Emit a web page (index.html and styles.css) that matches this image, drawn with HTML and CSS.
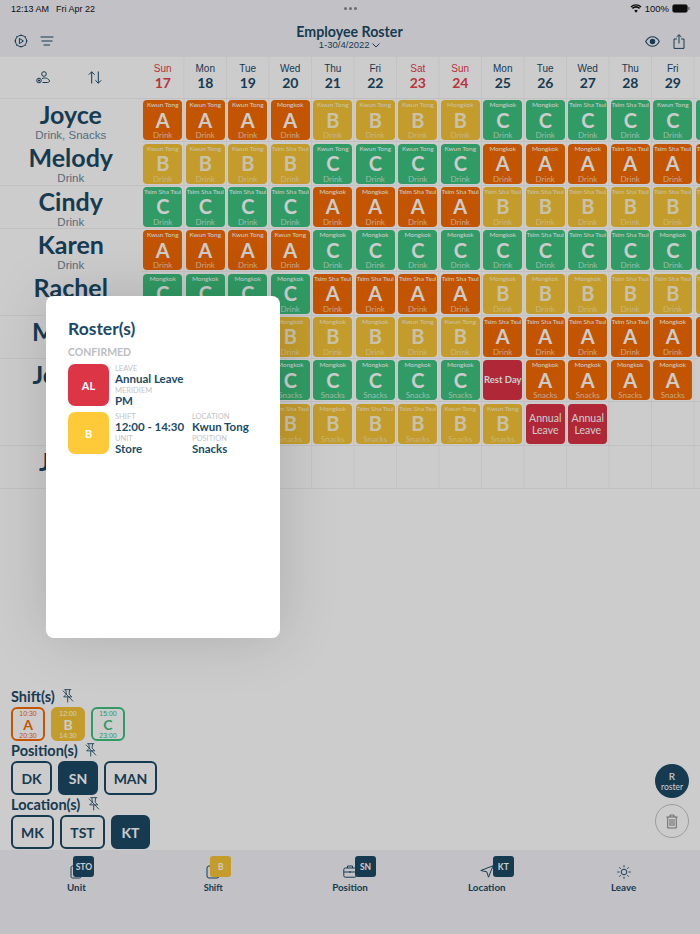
FILE: index.html
```html
<!DOCTYPE html>
<html lang="en">
<head>
    <meta charset="UTF-8">
    <meta name="viewport" content="width=device-width, initial-scale=1.0">
    <title>Employee Roster</title>
    <link rel="stylesheet" href="styles.css">
</head>
<body>
<div class="page">

    <!-- Status bar + nav -->
    <header class="top">
        <div class="status">
            <span class="status-time"><span>12:13 AM</span><span>Fri Apr 22</span></span>
            <span class="status-dots"><i></i><i></i><i></i></span>
            <span class="status-right">
                <svg class="wifi" viewBox="0 0 16 12" width="12" height="9"><path d="M8 11.5 5.6 8.6a3.6 3.6 0 0 1 4.8 0zM3.9 6.7a6.2 6.2 0 0 1 8.2 0l1.5-1.7a8.6 8.6 0 0 0-11.2 0zM.6 3.2l1.2 1.3a9.4 9.4 0 0 1 12.4 0l1.2-1.3a11.2 11.2 0 0 0-14.800 0z" fill="#111"/></svg>
                100%
                <svg class="battery" viewBox="0 0 18 9" width="18" height="9"><rect x=".5" y=".5" width="15" height="8" rx="2" fill="#111" stroke="#555" stroke-width=".5"/><rect x="16.3" y="3" width="1.2" height="3" rx=".5" fill="#666"/></svg>
            </span>
        </div>
        <div class="nav">
            <div class="nav-left">
                <svg width="14" height="14" viewBox="0 0 14 14" fill="none" stroke="#1c4a66" stroke-width="1"><circle cx="7" cy="7" r="5.6"/><path d="M5.4 4.400 9.400 7l-4 2.600zM7 .4v1M7 12.600v1M.4 7h1M12.600 7h1M2.300 2.300l.7.7M11 11l.7.7M2.300 11.700 3 11M11 3l.7-.7"/></svg>
                <svg width="14" height="10" viewBox="0 0 14 10" fill="none" stroke="#1c4a66" stroke-width="1.100"><path d="M.5 1h13M1.500 5h11M3.500 9h6.500"/></svg>
            </div>
            <div class="nav-title">
                <h1>Employee Roster</h1>
                <div class="nav-range">1-30/4/2022
                    <svg width="8" height="5" viewBox="0 0 8 5" fill="none" stroke="#1c4a66"><path d="m.5.5 3.500 3.500L7.500.5"/></svg>
                </div>
            </div>
            <div class="nav-right">
                <svg width="15" height="11" viewBox="0 0 15 11" fill="none" stroke="#1c4a66" stroke-width="1.100"><path d="M.7 5.500C2.500 2.200 4.800.7 7.500.7s5 1.500 6.800 4.800c-1.800 3.300-4.100 4.800-6.800 4.800S2.500 8.800.7 5.500z"/><circle cx="7.500" cy="5.500" r="2.200" fill="#1c4a66"/></svg>
                <svg width="12" height="15" viewBox="0 0 12 15" fill="none" stroke="#1c4a66" stroke-width="1"><path d="M3.800 5H1v9.400h10V5H8.200M6 9.500V.8M3.600 3 6 .7 8.400 3"/></svg>
            </div>
        </div>
    </header>

    <!-- Roster table -->
    <section class="roster">
        <div class="row head">
            <div class="name-col tools">
                <svg width="14" height="13" viewBox="0 0 14 13" fill="none" stroke="#1c4a66" stroke-width="1"><circle cx="8" cy="3" r="2.300"/><path d="M6 7.500c3-1 6.500-.5 7.500 2.500 0 1-1 1.500-2 1.500H6.500"/><circle cx="3" cy="9.500" r="2.300"/><path d="M3 8.300v2.400M1.800 9.500h2.400"/></svg>
                <svg width="14" height="13" viewBox="0 0 14 13" fill="none" stroke="#1c4a66" stroke-width="1"><path d="M3.700 12.500V.8M.8 3.700 3.700.8l2.900 2.900M10.300.5v11.700M7.400 9.300l2.900 2.900 2.900-2.900"/></svg>
            </div>
            <div class="day off"><span>Sun</span><b>17</b></div>
            <div class="day"><span>Mon</span><b>18</b></div>
            <div class="day"><span>Tue</span><b>19</b></div>
            <div class="day"><span>Wed</span><b>20</b></div>
            <div class="day"><span>Thu</span><b>21</b></div>
            <div class="day"><span>Fri</span><b>22</b></div>
            <div class="day off"><span>Sat</span><b>23</b></div>
            <div class="day off"><span>Sun</span><b>24</b></div>
            <div class="day"><span>Mon</span><b>25</b></div>
            <div class="day"><span>Tue</span><b>26</b></div>
            <div class="day"><span>Wed</span><b>27</b></div>
            <div class="day"><span>Thu</span><b>28</b></div>
            <div class="day"><span>Fri</span><b>29</b></div>
            <div class="day off"><span>Sat</span><b>30</b></div>
        </div>

        <div class="row">
            <div class="name-col"><strong>Joyce</strong><small>Drink, Snacks</small></div>
            <div class="cell a"><i>Kwun Tong</i><b>A</b><i>Drink</i></div>
            <div class="cell a"><i>Kwun Tong</i><b>A</b><i>Drink</i></div>
            <div class="cell a"><i>Kwun Tong</i><b>A</b><i>Drink</i></div>
            <div class="cell a"><i>Mongkok</i><b>A</b><i>Drink</i></div>
            <div class="cell b"><i>Kwun Tong</i><b>B</b><i>Drink</i></div>
            <div class="cell b"><i>Kwun Tong</i><b>B</b><i>Drink</i></div>
            <div class="cell b"><i>Kwun Tong</i><b>B</b><i>Drink</i></div>
            <div class="cell b"><i>Mongkok</i><b>B</b><i>Drink</i></div>
            <div class="cell c"><i>Mongkok</i><b>C</b><i>Drink</i></div>
            <div class="cell c"><i>Mongkok</i><b>C</b><i>Drink</i></div>
            <div class="cell c"><i>Tsim Sha Tsui</i><b>C</b><i>Drink</i></div>
            <div class="cell c"><i>Tsim Sha Tsui</i><b>C</b><i>Drink</i></div>
            <div class="cell c"><i>Kwun Tong</i><b>C</b><i>Drink</i></div>
            <div class="cell c"><i>Kwun Tong</i><b>C</b><i>Drink</i></div>
        </div>
        <div class="row">
            <div class="name-col"><strong>Melody</strong><small>Drink</small></div>
            <div class="cell b"><i>Kwun Tong</i><b>B</b><i>Drink</i></div>
            <div class="cell b"><i>Kwun Tong</i><b>B</b><i>Drink</i></div>
            <div class="cell b"><i>Kwun Tong</i><b>B</b><i>Drink</i></div>
            <div class="cell b"><i>Tsim Sha Tsui</i><b>B</b><i>Drink</i></div>
            <div class="cell c"><i>Kwun Tong</i><b>C</b><i>Drink</i></div>
            <div class="cell c"><i>Kwun Tong</i><b>C</b><i>Drink</i></div>
            <div class="cell c"><i>Kwun Tong</i><b>C</b><i>Drink</i></div>
            <div class="cell c"><i>Kwun Tong</i><b>C</b><i>Drink</i></div>
            <div class="cell a"><i>Mongkok</i><b>A</b><i>Drink</i></div>
            <div class="cell a"><i>Mongkok</i><b>A</b><i>Drink</i></div>
            <div class="cell a"><i>Mongkok</i><b>A</b><i>Drink</i></div>
            <div class="cell a"><i>Tsim Sha Tsui</i><b>A</b><i>Drink</i></div>
            <div class="cell a"><i>Tsim Sha Tsui</i><b>A</b><i>Drink</i></div>
            <div class="cell a"><i>Tsim Sha Tsui</i><b>A</b><i>Drink</i></div>
        </div>
        <div class="row">
            <div class="name-col"><strong>Cindy</strong><small>Drink</small></div>
            <div class="cell c"><i>Tsim Sha Tsui</i><b>C</b><i>Drink</i></div>
            <div class="cell c"><i>Tsim Sha Tsui</i><b>C</b><i>Drink</i></div>
            <div class="cell c"><i>Tsim Sha Tsui</i><b>C</b><i>Drink</i></div>
            <div class="cell c"><i>Tsim Sha Tsui</i><b>C</b><i>Drink</i></div>
            <div class="cell a"><i>Mongkok</i><b>A</b><i>Drink</i></div>
            <div class="cell a"><i>Mongkok</i><b>A</b><i>Drink</i></div>
            <div class="cell a"><i>Tsim Sha Tsui</i><b>A</b><i>Drink</i></div>
            <div class="cell a"><i>Tsim Sha Tsui</i><b>A</b><i>Drink</i></div>
            <div class="cell b"><i>Tsim Sha Tsui</i><b>B</b><i>Drink</i></div>
            <div class="cell b"><i>Tsim Sha Tsui</i><b>B</b><i>Drink</i></div>
            <div class="cell b"><i>Tsim Sha Tsui</i><b>B</b><i>Drink</i></div>
            <div class="cell b"><i>Tsim Sha Tsui</i><b>B</b><i>Drink</i></div>
            <div class="cell b"><i>Tsim Sha Tsui</i><b>B</b><i>Drink</i></div>
            <div class="cell b"><i>Tsim Sha Tsui</i><b>B</b><i>Drink</i></div>
        </div>
        <div class="row">
            <div class="name-col"><strong>Karen</strong><small>Drink</small></div>
            <div class="cell a"><i>Kwun Tong</i><b>A</b><i>Drink</i></div>
            <div class="cell a"><i>Kwun Tong</i><b>A</b><i>Drink</i></div>
            <div class="cell a"><i>Kwun Tong</i><b>A</b><i>Drink</i></div>
            <div class="cell a"><i>Kwun Tong</i><b>A</b><i>Drink</i></div>
            <div class="cell c"><i>Mongkok</i><b>C</b><i>Drink</i></div>
            <div class="cell c"><i>Mongkok</i><b>C</b><i>Drink</i></div>
            <div class="cell c"><i>Mongkok</i><b>C</b><i>Drink</i></div>
            <div class="cell c"><i>Mongkok</i><b>C</b><i>Drink</i></div>
            <div class="cell c"><i>Mongkok</i><b>C</b><i>Drink</i></div>
            <div class="cell c"><i>Tsim Sha Tsui</i><b>C</b><i>Drink</i></div>
            <div class="cell c"><i>Tsim Sha Tsui</i><b>C</b><i>Drink</i></div>
            <div class="cell c"><i>Tsim Sha Tsui</i><b>C</b><i>Drink</i></div>
            <div class="cell c"><i>Mongkok</i><b>C</b><i>Drink</i></div>
            <div class="cell c"><i>Mongkok</i><b>C</b><i>Drink</i></div>
        </div>
        <div class="row">
            <div class="name-col"><strong>Rachel</strong><small>Drink</small></div>
            <div class="cell c"><i>Mongkok</i><b>C</b><i>Drink</i></div>
            <div class="cell c"><i>Mongkok</i><b>C</b><i>Drink</i></div>
            <div class="cell c"><i>Mongkok</i><b>C</b><i>Drink</i></div>
            <div class="cell c"><i>Mongkok</i><b>C</b><i>Drink</i></div>
            <div class="cell a"><i>Tsim Sha Tsui</i><b>A</b><i>Drink</i></div>
            <div class="cell a"><i>Tsim Sha Tsui</i><b>A</b><i>Drink</i></div>
            <div class="cell a"><i>Tsim Sha Tsui</i><b>A</b><i>Drink</i></div>
            <div class="cell a"><i>Tsim Sha Tsui</i><b>A</b><i>Drink</i></div>
            <div class="cell b"><i>Mongkok</i><b>B</b><i>Drink</i></div>
            <div class="cell b"><i>Mongkok</i><b>B</b><i>Drink</i></div>
            <div class="cell b"><i>Mongkok</i><b>B</b><i>Drink</i></div>
            <div class="cell b"><i>Tsim Sha Tsui</i><b>B</b><i>Drink</i></div>
            <div class="cell b"><i>Tsim Sha Tsui</i><b>B</b><i>Drink</i></div>
            <div class="cell b"><i>Tsim Sha Tsui</i><b>B</b><i>Drink</i></div>
        </div>
        <div class="row">
            <div class="name-col"><strong>Mandy</strong><small>Drink</small></div>
            <div class="cell b"><i>Mongkok</i><b>B</b><i>Drink</i></div>
            <div class="cell b"><i>Mongkok</i><b>B</b><i>Drink</i></div>
            <div class="cell b"><i>Mongkok</i><b>B</b><i>Drink</i></div>
            <div class="cell b"><i>Mongkok</i><b>B</b><i>Drink</i></div>
            <div class="cell b"><i>Mongkok</i><b>B</b><i>Drink</i></div>
            <div class="cell b"><i>Mongkok</i><b>B</b><i>Drink</i></div>
            <div class="cell b"><i>Kwun Tong</i><b>B</b><i>Drink</i></div>
            <div class="cell b"><i>Kwun Tong</i><b>B</b><i>Drink</i></div>
            <div class="cell a"><i>Tsim Sha Tsui</i><b>A</b><i>Drink</i></div>
            <div class="cell a"><i>Tsim Sha Tsui</i><b>A</b><i>Drink</i></div>
            <div class="cell a"><i>Tsim Sha Tsui</i><b>A</b><i>Drink</i></div>
            <div class="cell a"><i>Tsim Sha Tsui</i><b>A</b><i>Drink</i></div>
            <div class="cell a"><i>Mongkok</i><b>A</b><i>Drink</i></div>
            <div class="cell a"><i>Mongkok</i><b>A</b><i>Drink</i></div>
        </div>
        <div class="row">
            <div class="name-col"><strong>Jessica</strong><small>Snacks</small></div>
            <div class="cell c"><i>Mongkok</i><b>C</b><i>Snacks</i></div>
            <div class="cell c"><i>Mongkok</i><b>C</b><i>Snacks</i></div>
            <div class="cell c"><i>Mongkok</i><b>C</b><i>Snacks</i></div>
            <div class="cell c"><i>Mongkok</i><b>C</b><i>Snacks</i></div>
            <div class="cell c"><i>Mongkok</i><b>C</b><i>Snacks</i></div>
            <div class="cell c"><i>Mongkok</i><b>C</b><i>Snacks</i></div>
            <div class="cell c"><i>Mongkok</i><b>C</b><i>Snacks</i></div>
            <div class="cell c"><i>Mongkok</i><b>C</b><i>Snacks</i></div>
            <div class="cell off rest">Rest Day</div>
            <div class="cell a"><i>Mongkok</i><b>A</b><i>Snacks</i></div>
            <div class="cell a"><i>Mongkok</i><b>A</b><i>Snacks</i></div>
            <div class="cell a"><i>Mongkok</i><b>A</b><i>Snacks</i></div>
            <div class="cell a"><i>Mongkok</i><b>A</b><i>Snacks</i></div>
        </div>
        <div class="row">
            <div class="name-col"><strong>Ivy</strong><small>Snacks</small></div>
            <div class="cell b"><i>Tsim Sha Tsui</i><b>B</b><i>Snacks</i></div>
            <div class="cell b"><i>Tsim Sha Tsui</i><b>B</b><i>Snacks</i></div>
            <div class="cell b"><i>Tsim Sha Tsui</i><b>B</b><i>Snacks</i></div>
            <div class="cell b"><i>Tsim Sha Tsui</i><b>B</b><i>Snacks</i></div>
            <div class="cell b"><i>Mongkok</i><b>B</b><i>Snacks</i></div>
            <div class="cell b"><i>Tsim Sha Tsui</i><b>B</b><i>Snacks</i></div>
            <div class="cell b"><i>Tsim Sha Tsui</i><b>B</b><i>Snacks</i></div>
            <div class="cell b"><i>Kwun Tong</i><b>B</b><i>Snacks</i></div>
            <div class="cell b"><i>Kwun Tong</i><b>B</b><i>Snacks</i></div>
            <div class="cell off">Annual Leave</div>
            <div class="cell off">Annual Leave</div>
        </div>
        <div class="row">
            <div class="name-col"><strong>Jamie</strong></div>
        </div>
    </section>

    <!-- Pickers -->
    <section class="pickers">
        <h3>Shift(s) <svg class="pin" width="12" height="14" viewBox="0 0 11 13" fill="none" stroke="#1c4a66" stroke-width=".8"><path d="M2 .6h6.500M3.500.8l.5 4-2.500 2.500h7.500L6.500 4.800 7 .8M5.200 7.500v5M.7 1.500l9.500 10"/></svg></h3>
        <div class="chips">
            <div class="shift a"><span>10:30</span><b>A</b><span>20:30</span></div>
            <div class="shift b"><span>12:00</span><b>B</b><span>14:30</span></div>
            <div class="shift c"><span>15:00</span><b>C</b><span>23:00</span></div>
        </div>
        <h3>Position(s) <svg class="pin" width="12" height="14" viewBox="0 0 11 13" fill="none" stroke="#1c4a66" stroke-width=".8"><path d="M2 .6h6.500M3.500.8l.5 4-2.500 2.500h7.500L6.500 4.800 7 .8M5.200 7.500v5M.7 1.500l9.500 10"/></svg></h3>
        <div class="chips">
            <div class="chip pos-dk">DK</div>
            <div class="chip on pos-sn">SN</div>
            <div class="chip pos-man">MAN</div>
        </div>
        <h3>Location(s) <svg class="pin" width="12" height="14" viewBox="0 0 11 13" fill="none" stroke="#1c4a66" stroke-width=".8"><path d="M2 .6h6.500M3.500.8l.5 4-2.500 2.500h7.500L6.500 4.800 7 .8M5.200 7.500v5M.7 1.500l9.500 10"/></svg></h3>
        <div class="chips">
            <div class="chip loc-mk">MK</div>
            <div class="chip loc-tst">TST</div>
            <div class="chip on loc-kt">KT</div>
        </div>
    </section>

    <!-- Tab bar -->
    <nav class="tabs">
        <div class="tab">
            <div class="tab-icon">
                <svg width="12" height="14" viewBox="0 0 12 14" fill="none" stroke="#1c4a66" stroke-width="1"><rect x="1" y="1" width="10" height="12" rx="1.500"/></svg>
                <span class="badge badge-unit">STO</span>
            </div>
            <span class="tab-label">Unit</span>
        </div>
        <div class="tab">
            <div class="tab-icon">
                <svg width="14" height="14" viewBox="0 0 14 14" fill="none" stroke="#1c4a66" stroke-width="1"><rect x="1" y="1" width="12" height="12" rx="2"/></svg>
                <span class="badge badge-shift">B</span>
            </div>
            <span class="tab-label small">Shift</span>
        </div>
        <div class="tab">
            <div class="tab-icon">
                <svg width="14" height="13" viewBox="0 0 14 13" fill="none" stroke="#1c4a66" stroke-width="1"><rect x=".8" y="3" width="12.400" height="9.200" rx="1.500"/><path d="M4.500 3V1h5v2M.8 7h12.400M7 6v2"/></svg>
                <span class="badge badge-pos">SN</span>
            </div>
            <span class="tab-label">Position</span>
        </div>
        <div class="tab">
            <div class="tab-icon">
                <svg width="14" height="13" viewBox="0 0 14 13" fill="none" stroke="#1c4a66" stroke-width="1"><path d="M13 .8 8.500 12.200 6.800 6.800.8 5.500z"/></svg>
                <span class="badge badge-loc">KT</span>
            </div>
            <span class="tab-label">Location</span>
        </div>
        <div class="tab">
            <div class="tab-icon">
                <svg width="14" height="14" viewBox="0 0 14 14" fill="none" stroke="#1c4a66" stroke-width="1"><circle cx="7" cy="7" r="2.800"/><path d="M7 .3v2M7 11.700v2M.3 7h2M11.700 7h2M2.300 2.300l1.400 1.400M10.300 10.300l1.400 1.400M2.300 11.700l1.400-1.400M10.300 3.700l1.400-1.400"/></svg>
            </div>
            <span class="tab-label">Leave</span>
        </div>
    </nav>

    <!-- Floating buttons -->
    <div class="fabs">
        <div class="fab fab-roster"><b>R</b><span>roster</span></div>
        <div class="fab fab-trash">
            <svg width="12" height="15" viewBox="0 0 12 15" fill="none" stroke="#777" stroke-width=".9"><path d="M.5 3h11M4 3V1h4v2M1.700 3v11h8.600V3M4 5v7M6 5v7M8 5v7"/></svg>
        </div>
    </div>

    <!-- Dim layer + dialog -->
    <div class="dim"></div>
    <div class="modal">
        <h2>Roster(s)</h2>
        <div class="modal-status">CONFIRMED</div>
        <div class="entry">
            <div class="tile tile-al">AL</div>
            <div class="fields">
                <div class="field"><label>LEAVE</label><p>Annual Leave</p><label>MERIDIEM</label><p>PM</p></div>
            </div>
        </div>
        <div class="entry">
            <div class="tile tile-b">B</div>
            <div class="fields">
                <div class="field"><label>SHIFT</label><p>12:00 - 14:30</p><label>UNIT</label><p>Store</p></div>
                <div class="field"><label>LOCATION</label><p>Kwun Tong</p><label>POSITION</label><p>Snacks</p></div>
            </div>
        </div>
    </div>
</div>
</body>
</html>
```

FILE: styles.css
```css
* {
    box-sizing: border-box;
}

body {
    margin: 0;
    font-family: 'Lato', sans-serif;
    color: #1c4a66;
    background: #fff;
}

.page {
    position: relative;
    width: 700px;
    height: 934px;
    overflow: hidden;
    display: flex;
    flex-direction: column;
}

/* top bar */
.top {
    height: 57px;
    background: #f3f2f7;
    flex: none;
}

.status {
    height: 17px;
    padding: 0 10px 0 11px;
    display: flex;
    align-items: center;
    justify-content: space-between;
    font-family: 'Liberation Sans', sans-serif;
    font-size: 9px;
    color: #111;
}

.status-time {
    display: flex;
    gap: 7px;
    width: 120px;
}

.status-dots {
    display: flex;
    gap: 2px;
}

.status-dots i {
    width: 3px;
    height: 3px;
    border-radius: 50%;
    background: #888;
}

.status-right {
    width: 120px;
    display: flex;
    align-items: center;
    justify-content: flex-end;
    gap: 3px;
    font-size: 9.5px;
}

.nav {
    display: grid;
    grid-template-columns: 1fr auto 1fr;
    align-items: center;
    padding: 0 15px 0 14px;
    height: 40px;
}

.nav-left {
    display: flex;
    align-items: center;
    gap: 12px;
    padding-top: 8px;
}

.nav-right {
    display: flex;
    align-items: center;
    justify-content: flex-end;
    gap: 13px;
    padding-top: 8px;
}

.nav-title {
    text-align: center;
    margin-top: -2px;
}

.nav-title h1 {
    margin: 0;
    font-size: 14.2px;
    font-weight: 700;
    line-height: 17px;
}

.nav-range {
    font-family: 'Liberation Sans', sans-serif;
    font-size: 9.5px;
    line-height: 10px;
}

/* roster table */
.roster {
    flex: 1;
    overflow: hidden;
}

.row {
    display: grid;
    grid-template-columns: 141.5px repeat(14, 42.5px);
    width: 736.5px;
    height: 43.33px;
    border-bottom: 1px solid #f2f2f2;
    background-image: linear-gradient(to right, #f4f4f4 1px, transparent 1px);
    background-size: 42.5px 100%;
    background-position: 141px 0;
}

.row.head {
    height: 42px;
}

.name-col {
    background: #fff;
    text-align: center;
    overflow: hidden;
    padding-top: 1px;
}

.name-col strong {
    display: block;
    font-size: 25px;
    line-height: 28px;
    font-weight: 700;
}

.name-col small {
    display: block;
    margin-top: 1px;
    font-family: 'Liberation Sans', sans-serif;
    font-size: 11.5px;
    line-height: 12px;
    color: #6e8799;
}

.tools {
    display: flex;
    align-items: center;
    justify-content: center;
    gap: 38px;
    padding: 0 3px 0 0;
}

.day {
    display: flex;
    flex-direction: column;
    align-items: center;
    padding-top: 5.5px;
}

.day span {
    font-family: 'Liberation Sans', sans-serif;
    font-size: 10px;
    line-height: 12px;
}

.day b {
    font-size: 14px;
    line-height: 16px;
}

.day.off {
    color: #e8414c;
}

.cell {
    margin: 1.3px 1.75px 1.5px;
    height: 40px;
    border-radius: 4px;
    color: #fff;
    display: flex;
    flex-direction: column;
    align-items: center;
    justify-content: space-between;
    overflow: hidden;
    white-space: nowrap;
}

.cell i {
    font-style: normal;
    font-size: 6.5px;
    line-height: 8px;
}

.cell i:first-child {
    padding-top: 1px;
}

.cell i:last-child {
    font-size: 8px;
    line-height: 9px;
    opacity: .65;
}

.cell b {
    font-size: 20px;
    line-height: 21px;
    font-weight: 700;
}

.cell.a { background: #f46a00; }
.cell.b { background: #f5c437; }
.cell.c { background: #3cc27e; }

.cell.b i,
.cell.b b {
    color: rgba(255, 255, 255, .8);
}

.cell.off {
    background: #dc3245;
    justify-content: center;
    text-align: center;
    font-size: 10.5px;
    line-height: 12px;
    white-space: normal;
}

.cell.rest {
    font-size: 9.5px;
    font-weight: 700;
    white-space: nowrap;
}

/* pickers */
.pickers {
    flex: none;
    padding: 0 0 1px 11px;
}

.pickers h3 {
    margin: 0;
    height: 20px;
    font-size: 14.5px;
    line-height: 20px;
    font-weight: 700;
}

.pin {
    margin-left: 4px;
    vertical-align: -1px;
}

.chips {
    display: flex;
    gap: 6px;
}

.shift {
    width: 34px;
    height: 34px;
    border: 2px solid;
    border-radius: 6px;
    display: flex;
    flex-direction: column;
    align-items: center;
    font-family: 'Liberation Sans', sans-serif;
    font-size: 7px;
    line-height: 8px;
    padding-top: 1px;
}

.shift b {
    font-family: 'Lato', sans-serif;
    font-size: 14px;
    line-height: 14px;
    font-weight: 700;
}

.shift.a { border-color: #f46a00; color: #f46a00; }
.shift.b { border-color: #f5c437; background: #f5c437; color: #fff; }
.shift.c { border-color: #3cc27e; color: #3cc27e; }

.chip {
    height: 34px;
    border: 2px solid #1c4a66;
    border-radius: 6px;
    display: flex;
    align-items: center;
    justify-content: center;
    font-size: 14px;
    font-weight: 700;
}

.chip.on {
    background: #1c4a66;
    color: #fff;
}

.pos-dk { width: 41px; }
.pos-sn { width: 40px; }
.pos-man { width: 53px; }
.loc-mk { width: 43px; }
.loc-tst { width: 45px; }
.loc-kt { width: 39px; }

/* tab bar */
.tabs {
    flex: none;
    height: 84px;
    background: #f3f2f7;
    padding: 15px 8px 0;
    display: flex;
}

.tab {
    flex: 1;
    display: flex;
    flex-direction: column;
    align-items: center;
}

.tab-icon {
    position: relative;
    height: 14px;
    display: flex;
    justify-content: center;
}

.tab-label {
    margin-top: 2px;
    font-size: 9.8px;
    line-height: 13px;
    font-weight: 700;
}

.tab-label.small {
    font-size: 9.2px;
}

.badge {
    position: absolute;
    top: -9px;
    width: 21px;
    height: 21px;
    border-radius: 3px;
    background: #1c4a66;
    color: #fff;
    font-size: 8.5px;
    font-weight: 700;
    display: flex;
    align-items: center;
    justify-content: center;
}

.badge-unit { left: 3px; }
.badge-shift { left: 4px; background: #f5c437; }
.badge-pos { left: 12px; }
.badge-loc { left: 13px; }

/* floating buttons */
.fabs {
    position: absolute;
    left: 655px;
    top: 764px;
    display: flex;
    flex-direction: column;
    gap: 6px;
}

.fab {
    width: 34px;
    height: 34px;
    border-radius: 50%;
    display: flex;
    flex-direction: column;
    align-items: center;
    justify-content: center;
}

.fab-roster {
    background: #1c4a66;
    color: #fff;
    font-size: 8.5px;
}

.fab-roster b {
    font-size: 10px;
    line-height: 12px;
    font-weight: 500;
}

.fab-trash {
    border: 1.5px solid #c4c4c4;
}

/* dialog */
.dim {
    position: absolute;
    inset: 0;
    background: rgba(0, 0, 0, .2);
}

.modal {
    position: absolute;
    left: 46px;
    top: 296px;
    width: 234px;
    height: 342px;
    background: #fff;
    border-radius: 8px;
    box-shadow: 0 0 60px rgba(0, 0, 0, .15);
    padding: 22px;
}

.modal h2 {
    margin: 0;
    font-size: 17.5px;
    line-height: 22px;
    font-weight: 700;
}

.modal-status {
    margin-top: 6px;
    font-size: 10.5px;
    line-height: 13px;
    font-weight: 700;
    color: #bdbdbd;
}

.entry {
    margin-top: 6px;
    display: flex;
    gap: 6px;
    height: 42px;
}

.modal-status + .entry {
    margin-top: 5px;
}

.tile {
    flex: none;
    width: 41px;
    height: 42px;
    border-radius: 7px;
    color: #fff;
    font-size: 11px;
    font-weight: 700;
    display: flex;
    align-items: center;
    justify-content: center;
}

.tile-al { background: #dc3545; }
.tile-b { background: #ffca3a; }

.fields {
    display: flex;
    flex: none;
}

.field {
    width: 77px;
    white-space: nowrap;
}

.field label {
    display: block;
    font-size: 7.5px;
    line-height: 9px;
    color: #c4c4c4;
}

.field p {
    margin: 0;
    font-size: 11.5px;
    line-height: 12.5px;
    font-weight: 700;
}
```
